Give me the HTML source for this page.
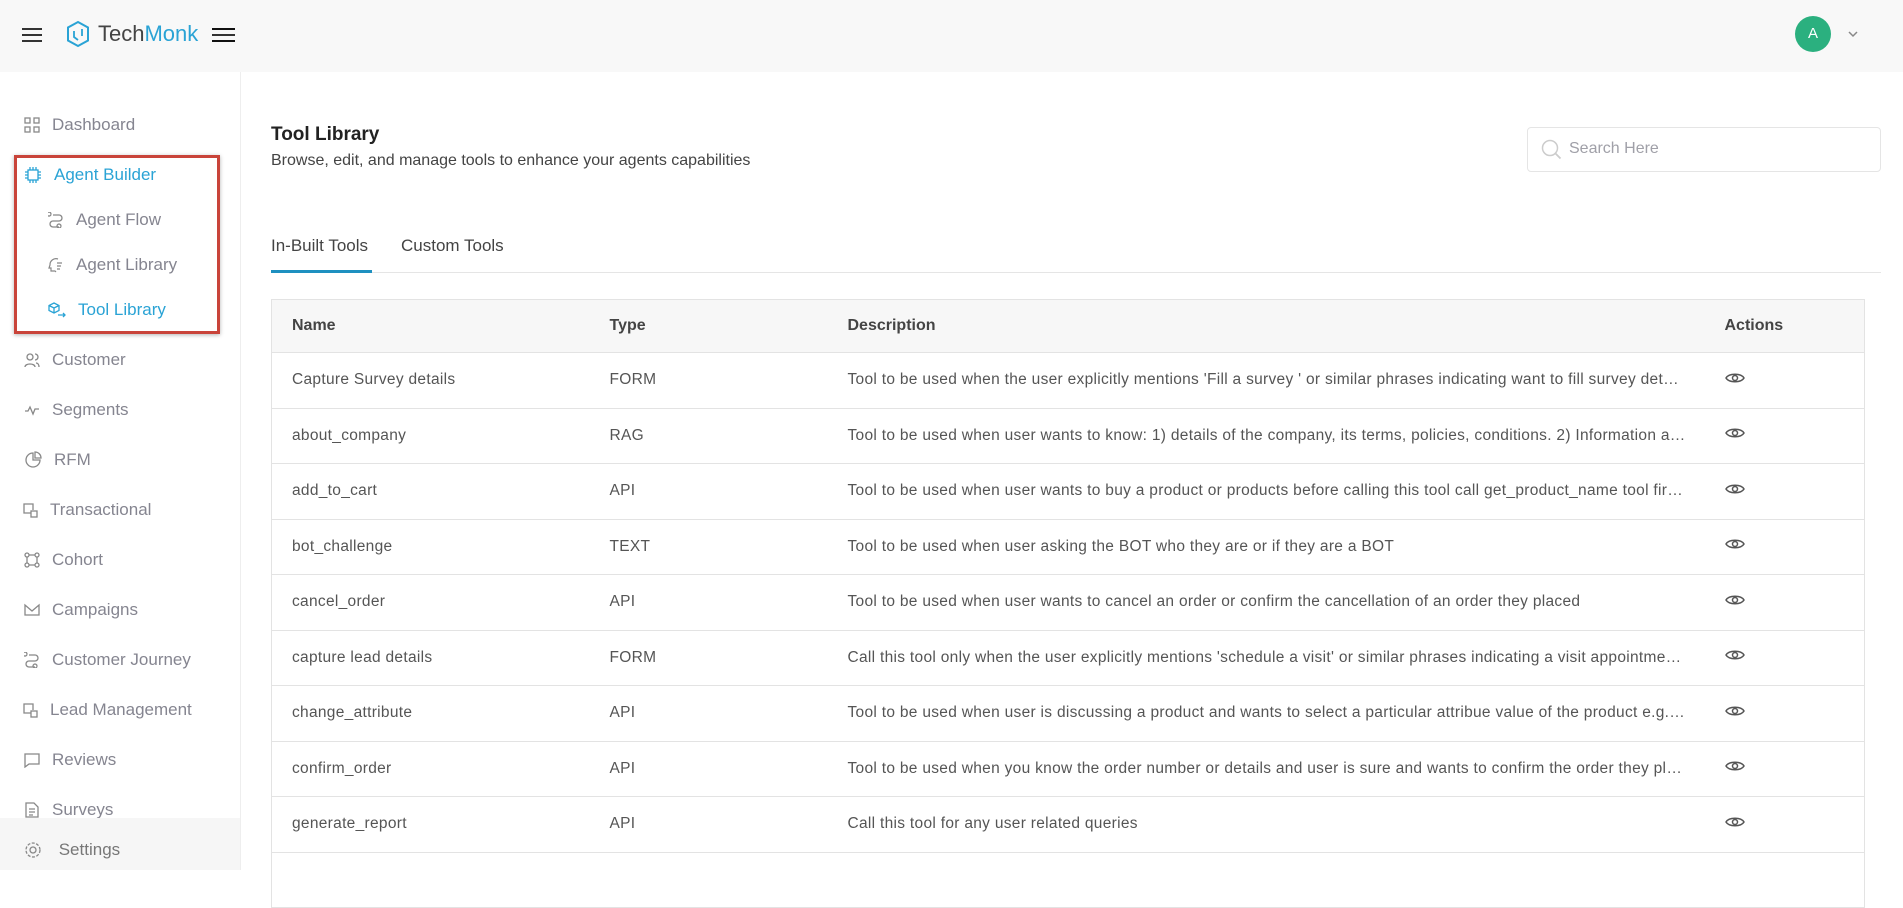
<!DOCTYPE html>
<html><head><meta charset="utf-8"><style>
*{box-sizing:border-box;margin:0;padding:0}
body{width:1903px;height:870px;overflow:hidden;background:#fff;font-family:"Liberation Sans",sans-serif;color:#333;position:relative}
.hdr{position:absolute;left:0;top:0;width:1903px;height:72px;background:#f8f8f8}
.ham{position:absolute;width:20px;height:14px;border-top:2px solid #333;border-bottom:2px solid #333}
.ham:after{content:"";position:absolute;left:0;top:4px;width:100%;height:2px;background:#333}
.side{position:absolute;left:0;top:72px;width:241px;height:798px;border-right:1px solid #eee;background:#fff}
.it{position:absolute;left:24px;font-size:17px;color:#858590;display:flex;align-items:center;height:24px}
.it svg{margin-right:12px}
.main{position:absolute;left:271px}
table{border-collapse:collapse;position:absolute;left:271px;top:299px;width:1593px;font-size:15.5px;table-layout:fixed}
th{background:#f7f7f7;text-align:left;font-weight:bold;font-size:16px;color:#444;height:53px;border:1px solid #e3e3e3;border-left:none;border-right:none;padding-left:20px}
td{height:55.5px;border-bottom:1px solid #e3e3e3;padding-left:20px;color:#555;white-space:nowrap;overflow:hidden;text-overflow:ellipsis;letter-spacing:.3px}
td.d{padding-right:18px}
tr{border-left:1px solid #e3e3e3;border-right:1px solid #e3e3e3}
</style></head><body>
<div class="hdr">
 <div class="ham" style="left:22px;top:28px"></div>
 <svg style="position:absolute;left:66px;top:20px" width="24" height="28" viewBox="0 0 24 28"><path d="M12 2L22 7.5V20.5L12 26L2 20.5V7.5Z" fill="none" stroke="#2aa3d5" stroke-width="2"/><path d="M8 11v6l4 3M16 9v7" stroke="#2aa3d5" stroke-width="1.8" fill="none"/></svg>
 <div style="position:absolute;left:98px;top:21px;font-size:22px;color:#444">Tech<span style="color:#2aa3d5">Monk</span></div>
 <div class="ham" style="left:212px;top:28px;width:23px;border-color:#111"></div>
 <div style="position:absolute;left:1795px;top:16px;width:36px;height:36px;border-radius:50%;background:#2bb07f;color:#fff;font-size:15px;text-align:center;line-height:36px">A</div>
 <svg style="position:absolute;left:1847px;top:30px" width="12" height="8"><path d="M2 2l4 4 4-4" stroke="#888" stroke-width="1.5" fill="none"/></svg>
</div>
<div class="side">
 <div class="it" style="top:41px"><svg width="16" height="16"><g fill="none" stroke="#888" stroke-width="1.3"><rect x="1" y="1" width="5" height="5"/><rect x="10" y="1" width="5" height="5"/><rect x="1" y="10" width="5" height="5"/><rect x="10" y="10" width="5" height="5"/></g></svg>Dashboard</div>
 <div style="position:absolute;left:14px;top:83px;width:206px;height:179px;border:3px solid #c9443a;box-shadow:0 1px 4px rgba(0,0,0,.3)"></div>
 <div class="it" style="top:91px;color:#2aa3d5"><svg width="18" height="18"><g fill="none" stroke="#2aa3d5" stroke-width="1.3"><rect x="4" y="4" width="10" height="10"/><path d="M1 6h3M1 9h3M1 12h3M14 6h3M14 9h3M14 12h3M6 1v3M9 1v3M12 1v3M6 14v3M9 14v3M12 14v3"/></g></svg>Agent Builder</div>
 <div class="it" style="left:48px;top:136px"><svg width="16" height="16"><path d="M3 2a2 2 0 1 0 0 .1M5 3h6a3 3 0 0 1 0 6H5a3 3 0 0 0 0 6h6M13 14a2 2 0 1 0 0 .1" fill="none" stroke="#888" stroke-width="1.3"/></svg>Agent Flow</div>
 <div class="it" style="left:48px;top:181px"><svg width="16" height="16"><path d="M10 2a6 6 0 0 0-8 6l-1 3h2v3h4l1 1M9 6h5M9 9h4M9 12h3" fill="none" stroke="#888" stroke-width="1.2"/></svg>Agent Library</div>
 <div class="it" style="left:48px;top:226px;color:#2aa3d5"><svg width="18" height="16"><path d="M6 1l5 2.5v5L6 11 1 8.5v-5zM1 3.5L6 6l5-2.5M6 6v5M10 13h7M15 11l2 2-2 2" fill="none" stroke="#2aa3d5" stroke-width="1.3"/></svg>Tool Library</div>
 <div class="it" style="top:276px"><svg width="16" height="16"><path d="M6 2a3 3 0 1 0 0 6 3 3 0 1 0 0-6M1 15c0-4 10-4 10 0M11 2a3 3 0 0 1 0 6M12 11c2 0 3 2 3 4" fill="none" stroke="#888" stroke-width="1.3"/></svg>Customer</div>
 <div class="it" style="top:326px"><svg width="16" height="16"><path d="M1 9h3l2-4 3 7 2-5h4" fill="none" stroke="#888" stroke-width="1.3"/></svg>Segments</div>
 <div class="it" style="top:376px"><svg width="18" height="18"><path d="M9 2a7 7 0 1 0 7 7H9zM11 1a6 6 0 0 1 6 6h-6z" fill="none" stroke="#888" stroke-width="1.3"/></svg>RFM</div>
 <div class="it" style="top:426px;left:22px"><svg width="16" height="16"><path d="M9 11H2V2h9v6" fill="none" stroke="#888" stroke-width="1.3"/><rect x="9" y="9" width="6" height="6" fill="none" stroke="#888" stroke-width="1.3"/></svg>Transactional</div>
 <div class="it" style="top:476px"><svg width="16" height="16"><g fill="none" stroke="#888" stroke-width="1.3"><circle cx="3" cy="3" r="2"/><circle cx="13" cy="3" r="2"/><circle cx="3" cy="13" r="2"/><circle cx="13" cy="13" r="2"/><path d="M3 5v6M13 5v6M5 3h6M5 13h6"/></g></svg>Cohort</div>
 <div class="it" style="top:526px"><svg width="16" height="16"><path d="M1 3v10h14V3L8 9z" fill="none" stroke="#888" stroke-width="1.3"/></svg>Campaigns</div>
 <div class="it" style="top:576px"><svg width="16" height="16"><path d="M3 2a2 2 0 1 0 0 .1M5 3h6a3 3 0 0 1 0 6H5a3 3 0 0 0 0 6h6M13 14a2 2 0 1 0 0 .1" fill="none" stroke="#888" stroke-width="1.3"/></svg>Customer Journey</div>
 <div class="it" style="top:626px;left:22px"><svg width="16" height="16"><path d="M9 11H2V2h9v6" fill="none" stroke="#888" stroke-width="1.3"/><rect x="9" y="9" width="6" height="6" fill="none" stroke="#888" stroke-width="1.3"/></svg>Lead Management</div>
 <div class="it" style="top:676px"><svg width="16" height="16"><path d="M1 2h14v10H5l-4 3z" fill="none" stroke="#888" stroke-width="1.3"/></svg>Reviews</div>
 <div class="it" style="top:726px"><svg width="16" height="16"><path d="M2 1h8l4 4v10H2zM5 7h6M5 10h6M5 13h4" fill="none" stroke="#888" stroke-width="1.3"/></svg>Surveys</div>
 <div style="position:absolute;left:0;top:746px;width:240px;height:52px;background:#f6f6f6"></div>
 <div class="it" style="top:766px;color:#777"><svg width="18" height="18"><circle cx="9" cy="9" r="3" fill="none" stroke="#888" stroke-width="1.3"/><circle cx="9" cy="9" r="7" fill="none" stroke="#888" stroke-width="1.3" stroke-dasharray="3 1.5"/></svg>&nbsp;Settings</div>
</div>
<div class="main" style="top:124px;font-size:19px;font-weight:bold;color:#222">Tool Library</div>
<div class="main" style="top:152px;font-size:16px;color:#444">Browse, edit, and manage tools to enhance your agents capabilities</div>
<div style="position:absolute;left:1527px;top:127px;width:354px;height:45px;border:1px solid #e5e5e5;border-radius:4px"></div>
<svg style="position:absolute;left:1540px;top:138px" width="24" height="24"><circle cx="10" cy="10" r="7.5" fill="none" stroke="#ccc" stroke-width="1.5"/><path d="M15.5 15.5l5 5" stroke="#ccc" stroke-width="1.8"/></svg>
<div style="position:absolute;left:1569px;top:140px;font-size:16px;color:#a0a0a8">Search Here</div>
<div class="main" style="top:236px;font-size:17px;color:#444">In-Built Tools</div>
<div style="position:absolute;left:401px;top:236px;font-size:17px;color:#444">Custom Tools</div>
<div style="position:absolute;left:271px;top:272px;width:1610px;height:1px;background:#e5e5e5"></div>
<div style="position:absolute;left:271px;top:270px;width:101px;height:3px;background:#1e90c0"></div>
<table>
<colgroup><col style="width:318px"><col style="width:238px"><col style="width:877px"><col style="width:160px"></colgroup>
<tr><th>Name</th><th>Type</th><th>Description</th><th>Actions</th></tr>
<tr><td>Capture Survey details</td><td>FORM</td><td class="d">Tool to be used when the user explicitly mentions 'Fill a survey ' or similar phrases indicating want to fill survey details and more</td><td>E</td></tr>
<tr><td>about_company</td><td>RAG</td><td class="d">Tool to be used when user wants to know: 1) details of the company, its terms, policies, conditions. 2) Information about it and its services</td><td>E</td></tr>
<tr><td>add_to_cart</td><td>API</td><td class="d">Tool to be used when user wants to buy a product or products before calling this tool call get_product_name tool first always</td><td>E</td></tr>
<tr><td>bot_challenge</td><td>TEXT</td><td class="d">Tool to be used when user asking the BOT who they are or if they are a BOT</td><td>E</td></tr>
<tr><td>cancel_order</td><td>API</td><td class="d">Tool to be used when user wants to cancel an order or confirm the cancellation of an order they placed</td><td>E</td></tr>
<tr><td>capture lead details</td><td>FORM</td><td class="d">Call this tool only when the user explicitly mentions 'schedule a visit' or similar phrases indicating a visit appointment request</td><td>E</td></tr>
<tr><td>change_attribute</td><td>API</td><td class="d">Tool to be used when user is discussing a product and wants to select a particular attribue value of the product e.g. size</td><td>E</td></tr>
<tr><td>confirm_order</td><td>API</td><td class="d">Tool to be used when you know the order number or details and user is sure and wants to confirm the order they placed</td><td>E</td></tr>
<tr><td>generate_report</td><td>API</td><td class="d">Call this tool for any user related queries</td><td>E</td></tr>
<tr><td>&nbsp;</td><td></td><td></td><td></td></tr>
</table>
<script>
document.querySelectorAll('td').forEach(function(t){if(t.textContent==='E'){t.innerHTML='<svg width="20" height="14" viewBox="0 0 20 14"><path d="M1 7C4 2 16 2 19 7C16 12 4 12 1 7Z" fill="none" stroke="#555" stroke-width="1.5"/><circle cx="10" cy="7" r="2.5" fill="none" stroke="#555" stroke-width="1.5"/></svg>';}});
</script>
</body></html>
